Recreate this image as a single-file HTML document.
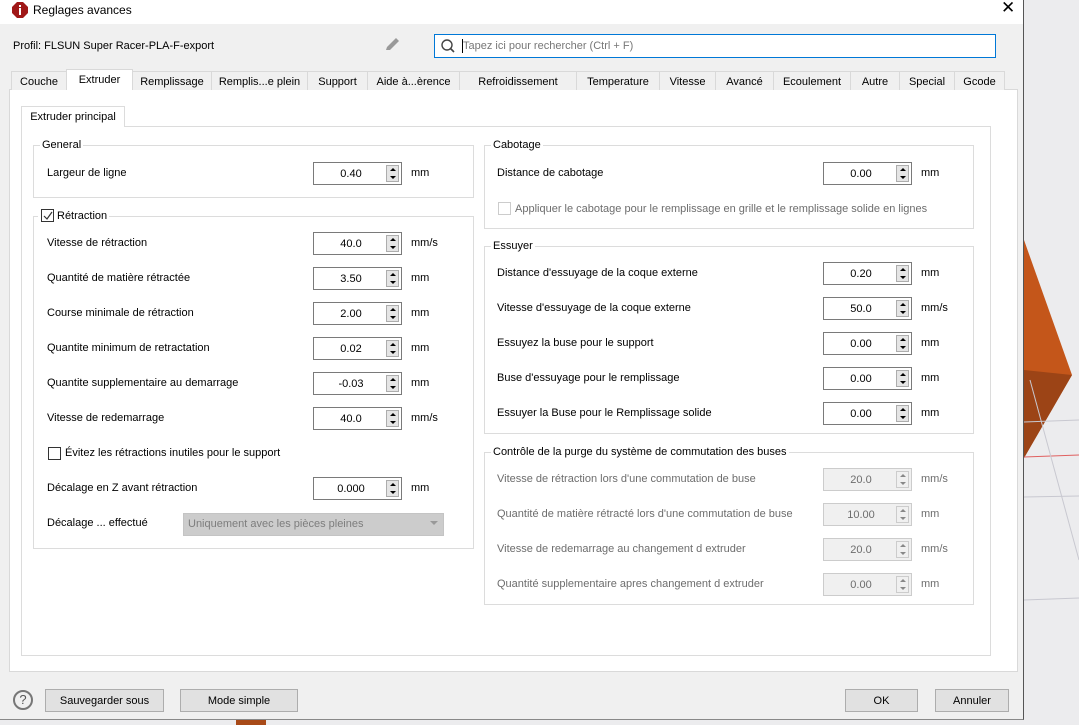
<!DOCTYPE html>
<html><head><meta charset="utf-8"><style>
*{box-sizing:border-box;margin:0;padding:0}
body{width:1079px;height:725px;position:relative;overflow:hidden;background:#ececee;font-family:"Liberation Sans",sans-serif;font-size:11px;color:#000}
.a{position:absolute;white-space:nowrap;line-height:17px}
.dlg{position:absolute;left:0;top:0;width:1024px;height:720px;background:#f0f0f0;border-right:1px solid #555;border-bottom:1px solid #888}
.tab{position:absolute;top:71px;height:19px;border:1px solid #d9d9d9;border-bottom:none;background:#f0f0f0;text-align:center;line-height:20px}
.grp{position:absolute;border:1px solid #dcdcdc}
.gt{position:absolute;top:-8px;left:6px;background:#fff;padding:0 2px;line-height:15px}
.sp{position:absolute;width:89px;height:23px;border:1px solid #7a7a7a;background:#fff}
.sp span{position:absolute;left:0;width:74px;text-align:center;top:5px}
.sp i{position:absolute;right:2px;top:2px;width:13px;height:17px;border:1px solid #adadad;background:#e5e5e5}
.sp i:before{content:"";position:absolute;left:3px;top:2px;border:3px solid transparent;border-bottom:3px solid #000;border-top:none}
.sp i:after{content:"";position:absolute;left:3px;top:10px;border:3px solid transparent;border-top:3px solid #000;border-bottom:none}
.sp.d{background:#f0f0f0;border-color:#ccc;color:#6d6d6d}
.sp.d i{border-color:#ccc;background:#f0f0f0}
.sp.d i:before{border-bottom-color:#888}.sp.d i:after{border-top-color:#888}
.g{color:#6d6d6d}
.btn{position:absolute;top:689px;height:23px;border:1px solid #adadad;background:#e1e1e1;text-align:center;line-height:22px}
.cb{position:absolute;width:13px;height:13px;border:1px solid #333;background:#fff}
</style></head><body>
<svg class="a" style="left:0;top:0" width="1079" height="725">
<polygon points="1024,240 1072,375 1024,458" fill="#c4561a"/>
<polygon points="1024,370 1072,375 1024,458" fill="#9c4416"/>
<line x1="1024" y1="422" x2="1079" y2="420" stroke="#c8c8d0"/>
<line x1="1024" y1="457" x2="1079" y2="455" stroke="#e06060"/>
<line x1="1024" y1="497" x2="1079" y2="496" stroke="#c8c8d0"/>
<line x1="1024" y1="600" x2="1079" y2="598" stroke="#c8c8d0"/>
<line x1="1030" y1="380" x2="1079" y2="560" stroke="#c8c8d0"/>
<rect x="0" y="130" width="5" height="530" fill="#c4561a"/>
<rect x="236" y="718" width="30" height="7" fill="#a84a18"/>
</svg>
<div class="dlg">
<div class="a" style="left:0;top:0;width:1023px;height:24px;background:#fff"></div>
<svg class="a" style="left:12px;top:2px" width="16" height="16"><polygon points="5,0 11,0 16,5 16,11 11,16 5,16 0,11 0,5" fill="#a01818"/><rect x="7" y="3" width="2" height="2" fill="#fff"/><rect x="7" y="6" width="2" height="7" fill="#fff"/></svg>
<div class="a" style="left:33px;top:2px;font-size:12px">Reglages avances</div>
<div class="a" style="left:1001px;top:-1px;font-size:17px">✕</div>
<div class="a" style="left:13px;top:38px">Profil: FLSUN Super Racer-PLA-F-export</div>
<svg class="a" style="left:383px;top:37px" width="18" height="16"><path d="M3 13 L4 10 L13 1 L16 4 L7 13 Z" fill="#999"/></svg>
<div class="a" style="left:434px;top:34px;width:562px;height:24px;border:1px solid #0078d7;background:#fff"></div>
<svg class="a" style="left:440px;top:38px" width="16" height="16"><circle cx="7" cy="7" r="5" fill="none" stroke="#444" stroke-width="1.4"/><line x1="10.5" y1="10.5" x2="14" y2="14" stroke="#444" stroke-width="1.6"/></svg>
<div class="a" style="left:462px;top:39px;width:1px;height:14px;background:#000"></div>
<div class="a g" style="left:463px;top:38px;color:#777">Tapez ici pour rechercher (Ctrl + F)</div>
<div class="a" style="left:9px;top:89px;width:1009px;height:583px;background:#fff;border:1px solid #d9d9d9"></div>
<div class="tab" style="left:11px;width:56px">Couche</div>
<div class="tab" style="left:66px;width:67px;top:69px;height:21px;background:#fff;z-index:2">Extruder</div>
<div class="tab" style="left:132px;width:80px">Remplissage</div>
<div class="tab" style="left:211px;width:97px">Remplis...e plein</div>
<div class="tab" style="left:307px;width:61px">Support</div>
<div class="tab" style="left:367px;width:93px">Aide à...èrence</div>
<div class="tab" style="left:459px;width:118px">Refroidissement</div>
<div class="tab" style="left:576px;width:84px">Temperature</div>
<div class="tab" style="left:659px;width:57px">Vitesse</div>
<div class="tab" style="left:715px;width:59px">Avancé</div>
<div class="tab" style="left:773px;width:78px">Ecoulement</div>
<div class="tab" style="left:850px;width:50px">Autre</div>
<div class="tab" style="left:899px;width:56px">Special</div>
<div class="tab" style="left:954px;width:51px">Gcode</div>
<div class="a" style="left:21px;top:126px;width:970px;height:530px;border:1px solid #dcdcdc;background:#fff"></div>
<div class="a" style="left:21px;top:106px;width:104px;height:21px;border:1px solid #dcdcdc;border-bottom:none;background:#fff;text-align:center;line-height:21px">Extruder principal</div>

<div class="grp" style="left:33px;top:145px;width:441px;height:53px"><div class="gt">General</div></div>
<div class="a" style="left:47px;top:165px">Largeur de ligne</div>
<div class="sp" style="left:313px;top:162px"><span>0.40</span><i></i></div><div class="a" style="left:411px;top:165px">mm</div>

<div class="grp" style="left:33px;top:216px;width:441px;height:333px"><div class="gt" style="left:4px;padding-left:19px">Rétraction</div></div>
<div class="cb" style="left:41px;top:209px"></div>
<svg class="a" style="left:43px;top:211px" width="10" height="10"><path d="M1 5 L4 8 L9 1" fill="none" stroke="#333" stroke-width="1.2"/></svg>
<div class="a" style="left:47px;top:235px">Vitesse de rétraction</div>
<div class="sp" style="left:313px;top:232px"><span>40.0</span><i></i></div><div class="a" style="left:411px;top:235px">mm/s</div>
<div class="a" style="left:47px;top:270px">Quantité de matière rétractée</div>
<div class="sp" style="left:313px;top:267px"><span>3.50</span><i></i></div><div class="a" style="left:411px;top:270px">mm</div>
<div class="a" style="left:47px;top:305px">Course minimale de rétraction</div>
<div class="sp" style="left:313px;top:302px"><span>2.00</span><i></i></div><div class="a" style="left:411px;top:305px">mm</div>
<div class="a" style="left:47px;top:340px">Quantite minimum de retractation</div>
<div class="sp" style="left:313px;top:337px"><span>0.02</span><i></i></div><div class="a" style="left:411px;top:340px">mm</div>
<div class="a" style="left:47px;top:375px">Quantite supplementaire au demarrage</div>
<div class="sp" style="left:313px;top:372px"><span>-0.03</span><i></i></div><div class="a" style="left:411px;top:375px">mm</div>
<div class="a" style="left:47px;top:410px">Vitesse de redemarrage</div>
<div class="sp" style="left:313px;top:407px"><span>40.0</span><i></i></div><div class="a" style="left:411px;top:410px">mm/s</div>
<div class="cb" style="left:48px;top:447px"></div>
<div class="a" style="left:65px;top:445px">Évitez les rétractions inutiles pour le support</div>
<div class="a" style="left:47px;top:480px">Décalage en Z avant rétraction</div>
<div class="sp" style="left:313px;top:477px"><span>0.000</span><i></i></div><div class="a" style="left:411px;top:480px">mm</div>
<div class="a" style="left:47px;top:515px">Décalage ... effectué</div>
<div class="a" style="left:183px;top:513px;width:261px;height:23px;background:#ccc;border:1px solid #c4c4c4;color:#7d7d7d;padding:2px 0 0 4px">Uniquement avec les pièces pleines</div>
<div class="a" style="left:430px;top:521px;border:4px solid transparent;border-top:4px solid #999;line-height:0"></div>

<div class="grp" style="left:484px;top:145px;width:490px;height:84px"><div class="gt">Cabotage</div></div>
<div class="a" style="left:497px;top:165px">Distance de cabotage</div>
<div class="sp" style="left:823px;top:162px"><span>0.00</span><i></i></div><div class="a" style="left:921px;top:165px">mm</div>
<div class="cb" style="left:498px;top:202px;border-color:#ccc"></div>
<div class="a g" style="left:515px;top:201px">Appliquer le cabotage pour le remplissage en grille et le remplissage solide en lignes</div>

<div class="grp" style="left:484px;top:246px;width:490px;height:188px"><div class="gt">Essuyer</div></div>
<div class="a" style="left:497px;top:265px">Distance d'essuyage de la coque externe</div>
<div class="sp" style="left:823px;top:262px"><span>0.20</span><i></i></div><div class="a" style="left:921px;top:265px">mm</div>
<div class="a" style="left:497px;top:300px">Vitesse d'essuyage de la coque externe</div>
<div class="sp" style="left:823px;top:297px"><span>50.0</span><i></i></div><div class="a" style="left:921px;top:300px">mm/s</div>
<div class="a" style="left:497px;top:335px">Essuyez la buse pour le support</div>
<div class="sp" style="left:823px;top:332px"><span>0.00</span><i></i></div><div class="a" style="left:921px;top:335px">mm</div>
<div class="a" style="left:497px;top:370px">Buse d'essuyage pour le remplissage</div>
<div class="sp" style="left:823px;top:367px"><span>0.00</span><i></i></div><div class="a" style="left:921px;top:370px">mm</div>
<div class="a" style="left:497px;top:405px">Essuyer la Buse pour le Remplissage solide</div>
<div class="sp" style="left:823px;top:402px"><span>0.00</span><i></i></div><div class="a" style="left:921px;top:405px">mm</div>

<div class="grp" style="left:484px;top:452px;width:490px;height:153px"><div class="gt">Contrôle de la purge du système de commutation des buses</div></div>
<div class="a g" style="left:497px;top:471px">Vitesse de rétraction lors d'une commutation de buse</div>
<div class="sp d" style="left:823px;top:468px"><span>20.0</span><i></i></div><div class="a g" style="left:921px;top:471px">mm/s</div>
<div class="a g" style="left:497px;top:506px">Quantité de matière rétracté lors d'une commutation de buse</div>
<div class="sp d" style="left:823px;top:503px"><span>10.00</span><i></i></div><div class="a g" style="left:921px;top:506px">mm</div>
<div class="a g" style="left:497px;top:541px">Vitesse de redemarrage au changement d extruder</div>
<div class="sp d" style="left:823px;top:538px"><span>20.0</span><i></i></div><div class="a g" style="left:921px;top:541px">mm/s</div>
<div class="a g" style="left:497px;top:576px">Quantité supplementaire apres changement d extruder</div>
<div class="sp d" style="left:823px;top:573px"><span>0.00</span><i></i></div><div class="a g" style="left:921px;top:576px">mm</div>

<div class="a" style="left:13px;top:690px;width:20px;height:20px;border:2px solid #777;border-radius:50%;text-align:center;line-height:16px;color:#555;font-size:13px">?</div>
<div class="btn" style="left:45px;width:119px">Sauvegarder sous</div>
<div class="btn" style="left:180px;width:118px">Mode simple</div>
<div class="btn" style="left:845px;width:73px">OK</div>
<div class="btn" style="left:935px;width:74px">Annuler</div>
</div>
</body></html>
